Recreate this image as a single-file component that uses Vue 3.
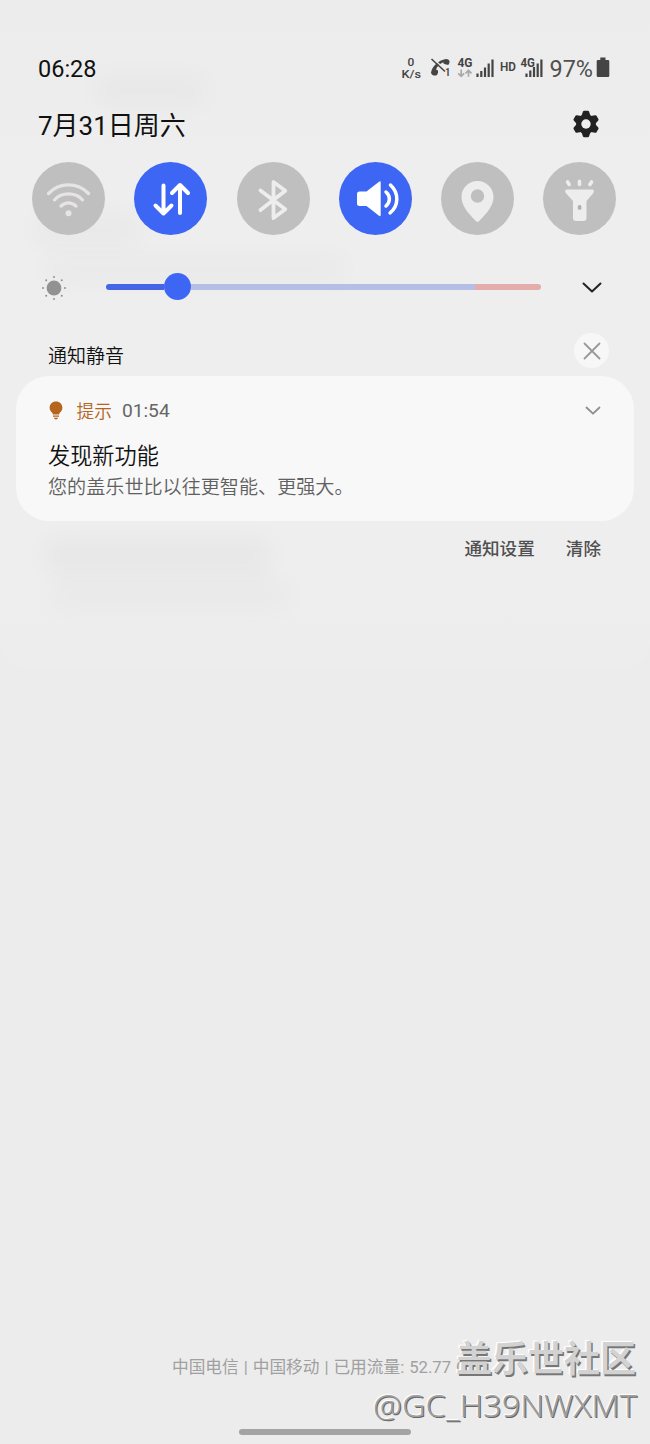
<script setup>
const toggles = [
  { id: 'wifi', on: false },
  { id: 'data', on: true },
  { id: 'bluetooth', on: false },
  { id: 'sound', on: true },
  { id: 'location', on: false },
  { id: 'torch', on: false },
]
const rays = [0, 45, 90, 135, 180, 225, 270, 315]
const teeth = [0, 60, 120, 180, 240, 300]
</script>

<template>
  <main class="screen">
    <div class="haze h1"></div>
    <div class="haze h2"></div>
    <div class="haze h3"></div>
    <div class="haze h4"></div>
    <div class="haze h5"></div>
    <div class="sheet">
      <header class="status">
        <span class="clock">06:28</span>
        <svg class="indicators" width="212" height="30" viewBox="400 53 212 30">
          <g fill="#444" font-weight="500">
            <text x="407.500" y="65.500" font-size="11.500" textLength="6.800" lengthAdjust="spacingAndGlyphs">0</text>
            <text x="401.500" y="77.600" font-size="11.500" textLength="19.500" lengthAdjust="spacingAndGlyphs">K/s</text>
            <text x="444.500" y="76.300" font-size="11">1</text>
            <text x="457.500" y="67" font-size="12.800" font-weight="700" textLength="15" lengthAdjust="spacingAndGlyphs">4G</text>
            <text x="500" y="71.300" font-size="12" font-weight="600" textLength="16" lengthAdjust="spacingAndGlyphs">HD</text>
            <text x="520.500" y="67" font-size="12.800" font-weight="700" textLength="14.500" lengthAdjust="spacingAndGlyphs">4G</text>
            <text x="549.500" y="76.700" font-size="23.500" font-weight="400" fill="#505050" textLength="43.500" lengthAdjust="spacingAndGlyphs">97%</text>
          </g>
          <path d="M431 72.500C432.500 66 438 60.500 446 59C448 59 449.700 60 449.600 62L448.800 64.500C446.500 65 445 64.500 443.500 63.600L443.300 62.300C440 63.500 437 66.500 436 69.700L437.600 70C438.500 71.500 438.300 73 436.800 75.300C434 76.200 431.200 75 431 72.500Z" fill="#444"/>
          <path d="M433 58.500L446 70.500" stroke="#ececec" stroke-width="1.600"/>
          <path d="M431.500 59L445 71.500" stroke="#444" stroke-width="1.600"/>
          <g fill="none" stroke="#aaa" stroke-width="1.700">
            <path d="M461.200 69.500V76M458.200 73.300L461.200 76.300L464.200 73.300M468.500 76.800V70.300M465.500 73.300L468.500 70.300L471.500 73.300"/>
          </g>
          <path d="M477.500 73.500V77M481.300 71V77M485 67.500V77M488.700 63.500V77M492.500 59.500V77" stroke="#444" stroke-width="2.200"/>
          <path d="M526.500 73.500V77M530.300 70.500V77M534 67V77M537.700 63.500V77M541.400 59.500V77" stroke="#444" stroke-width="2.200"/>
          <path d="M600.300 57.500H605.500V60H608Q609.300 60 609.300 61.300V75.700Q609.300 77 608 77H598Q596.700 77 596.700 75.700V61.300Q596.700 60 598 60H600.300Z" fill="#444"/>
        </svg>
      </header>

      <div class="date-row">
        <span class="date">7月31日周六</span>
        <svg width="28" height="28" viewBox="-14 -14 28 28">
          <circle r="9.800" fill="#222"/>
          <path v-for="a in teeth" :key="a" :transform="`rotate(${a})`" d="M-4.600 -8L-3 -12.400Q-2.700 -13.200 -1.900 -13.200H1.900Q2.700 -13.200 3 -12.400L4.600 -8Z" fill="#222"/>
          <circle r="4.700" fill="#eee"/>
        </svg>
      </div>

      <div class="toggles">
        <div v-for="t in toggles" :key="t.id" class="toggle" :class="{ on: t.on }">
          <svg width="73" height="73" viewBox="0 0 73 73" fill="none" stroke-linecap="round" stroke-linejoin="round">
            <g v-if="t.id === 'wifi'" stroke="#e6e4e4" stroke-width="3.300">
              <path d="M16.500 31.500C27.500 20 45.500 20 56.500 31.500M22.500 37.800C30 30 43 30 50.500 37.800M29 44C33.500 39.800 39.500 39.800 44 44"/>
              <circle cx="36.500" cy="51.300" r="3" fill="#e6e4e4" stroke="none"/>
            </g>
            <g v-else-if="t.id === 'data'" stroke="#fff" stroke-width="4">
              <path d="M29.500 23.500V51.500M21.500 43.500L29.500 51.500L37.500 43.500M46 51V23M38 31L46 23L54 31"/>
            </g>
            <path v-else-if="t.id === 'bluetooth'" d="M23.500 28.500L48.300 47.200L36.500 56V20L48.300 28.800L23.500 48" stroke="#ededed" stroke-width="3.800"/>
            <g v-else-if="t.id === 'sound'">
              <path d="M20.500 29.500H27.500L40 19.800Q41.700 18.600 41.700 20.500V53Q41.700 54.900 40 53.700L27.500 44H20.500Q18 44 18 41.500V32Q18 29.500 20.500 29.500Z" fill="#fff"/>
              <path d="M47 30C51.500 34 51.500 40 47 44M51.500 23C60 31 60 43.500 51 51" stroke="#fff" stroke-width="3.500"/>
            </g>
            <path v-else-if="t.id === 'location'" fill-rule="evenodd" fill="#ededed" d="M36.500 19C27.500 19 20.500 26 20.500 35C20.500 43.500 27 51 34.800 59Q36.500 60.700 38.200 59C46 51 52.500 43.500 52.500 35C52.500 26 45.500 19 36.500 19ZM36.500 27.300A6.700 6.700 0 1 1 36.500 40.700A6.700 6.700 0 1 1 36.500 27.300Z"/>
            <g v-else transform="translate(0 .5)">
              <path fill="#ededed" d="M23.500 27H49.500Q51 27 50.800 29Q50.500 30.500 49.500 31.500L43.500 38.500V55.500Q43.500 58.500 40.500 58.500H33Q30 58.500 30 55.500V38.500L23.700 31.500Q22.500 30.500 22.200 29Q22 27 23.500 27Z"/>
              <path d="M24.600 19.500L26.200 21.900M36.500 18.800V21.900M48.500 19.500L46.900 21.900" stroke="#ededed" stroke-width="3.600"/>
              <rect x="34.800" y="42.500" width="3.600" height="4.800" rx="1.500" fill="#b0b0b0"/>
            </g>
          </svg>
        </div>
      </div>

      <div class="brightness">
        <svg class="sun" width="26" height="26" viewBox="-13 -13 26 26" fill="#929292">
          <circle r="7.400"/>
          <circle v-for="a in rays" :key="a" :transform="`rotate(${a})`" cy="-11" r="1"/>
        </svg>
        <div class="track"><i class="fill"></i><i class="knob"></i><i class="rest"></i><i class="hot"></i></div>
        <svg class="expand" width="22" height="14" viewBox="0 0 22 14"><path d="M2.500 2.500L11 10.500L19.500 2.500" fill="none" stroke="#222" stroke-width="2" stroke-linecap="round" stroke-linejoin="round"/></svg>
      </div>

      <div class="section-head">
        <span>通知静音</span>
        <div class="close"><svg width="18" height="18" viewBox="0 0 18 18"><path d="M1.500 1.500L16.500 16.500M16.500 1.500L1.500 16.500" stroke="#999" stroke-width="1.800" stroke-linecap="round"/></svg></div>
      </div>

      <article class="card">
        <div class="card-head">
          <svg width="14" height="19" viewBox="0 0 14 19" fill="#b5651d">
            <path d="M7 .5C3.300.5.600 3.200.600 6.700C.600 9 2 10.800 3.400 12Q3.900 12.600 3.900 13.500H10.100Q10.100 12.600 10.600 12C12 10.800 13.400 9 13.400 6.700C13.400 3.200 10.700.5 7 .5Z"/>
            <path d="M4 14.600H10V15.800H4ZM4.800 16.700H9.200Q8.500 18.500 7 18.500T4.800 16.700Z"/>
          </svg>
          <span class="app">提示</span><span class="time">01:54</span>
          <svg class="more" width="18" height="12" viewBox="0 0 18 12"><path d="M2.500 2.500L9 8.700L15.500 2.500" fill="none" stroke="#8e8e8e" stroke-width="1.800" stroke-linecap="round" stroke-linejoin="round"/></svg>
        </div>
        <div class="title">发现新功能</div>
        <div class="desc">您的盖乐世比以往更智能、更强大。</div>
      </article>

      <div class="actions"><span>通知设置</span><span>清除</span></div>
    </div>

    <footer class="carrier">中国电信 | 中国移动 | 已用流量: 52.77 GB</footer>
    <svg class="watermark" width="290" height="104" viewBox="360 1340 290 104">
      <text class="forum" x="456" y="1372" font-size="36" textLength="180">盖乐世社区</text>
      <text class="user" x="373" y="1417" font-size="32" textLength="264" lengthAdjust="spacingAndGlyphs">@GC_H39NWXMT</text>
    </svg>
    <div class="home"></div>
  </main>
</template>

<style>
body { margin: 0; background: #ececec; }
</style>

<style scoped>
.screen {
  position: relative;
  box-sizing: border-box;
  width: 650px;
  height: 1444px;
  overflow: hidden;
  display: flex;
  flex-direction: column;
  background: #ececec;
  font-family: Roboto, "Noto Sans CJK SC", sans-serif;
  color: #111;
}
.sheet {
  height: 668px;
  flex: none;
  box-sizing: border-box;
  padding-top: 48px;
  border-radius: 0 0 26px 26px;
  background: linear-gradient(#ececec, #eee 160px, #eee 600px, #ededed);
}
.haze { position: absolute; z-index: 1; background: #000; filter: blur(14px); opacity: .022; }
.sheet > * { position: relative; z-index: 2; }
.h1 { left: 95px; top: 76px; width: 110px; height: 30px; }
.h2 { left: 35px; top: 215px; width: 105px; height: 30px; }
.h3 { left: 45px; top: 258px; width: 300px; height: 22px; }
.h4 { left: 45px; top: 540px; width: 225px; height: 32px; opacity: .03; }
.h5 { left: 50px; top: 580px; width: 240px; height: 30px; opacity: .018; }
.status {
  height: 40px;
  display: flex;
  align-items: center;
  justify-content: space-between;
  padding: 0 38px;
}
.clock { font-size: 23.500px; padding-top: 1px; }
.date-row {
  height: 74px;
  display: flex;
  align-items: center;
  justify-content: space-between;
  padding: 0 50px 0 38px;
}
.date { font-size: 26px; line-height: 36px; padding-top: 1px; }
.date-row svg { margin-top: -2px; }
.toggles { display: flex; justify-content: space-between; padding: 0 33.500px 0 32px; }
.toggle { width: 73px; height: 73px; border-radius: 50%; background: #bfbfbf; }
.toggle.on { background: #3d66f4; }
.toggle svg { display: block; }
.brightness { height: 103px; display: flex; align-items: center; padding-left: 41px; }
.sun { margin-top: 2px; }
.track { width: 435px; margin-left: 39px; display: flex; align-items: center; }
.fill { width: 58px; height: 6px; border-radius: 3px 0 0 3px; background: #4466e6; }
.knob { width: 27px; height: 27px; border-radius: 50%; background: #3d66f4; }
.rest { width: 284px; height: 6px; background: #b5bfe5; }
.hot { flex: 1; height: 6px; border-radius: 0 3px 3px 0; background: #e4acaa; }
.expand { margin-left: 39.500px; margin-top: 2px; }
.section-head {
  height: 38px;
  display: flex;
  justify-content: space-between;
  padding: 0 41px 0 48px;
  font-size: 19px;
  line-height: 34px;
  font-weight: 350;
}
.section-head span { margin-top: 1.500px; }
.close {
  width: 35px;
  height: 35px;
  margin-top: -5px;
  border-radius: 50%;
  background: #f7f7f7;
  display: flex;
  align-items: center;
  justify-content: center;
}
.card {
  box-sizing: border-box;
  width: 618px;
  height: 145px;
  margin-left: 16px;
  padding: 19px 32px 0;
  border-radius: 33px;
  background: #f8f8f8;
}
.card-head { height: 30px; margin-left: 1px; display: flex; align-items: center; }
.app { margin-left: 13.500px; font-size: 17.700px; color: #b5651d; font-weight: 350; }
.time { margin-left: 10px; font-size: 19.200px; color: #666; }
.more { margin-left: auto; margin-top: 2px; }
.title { margin-top: 14px; font-size: 22.200px; line-height: 34px; font-weight: 350; }
.desc { margin-top: 1px; font-size: 19.100px; line-height: 28px; color: #606060; white-space: nowrap; font-weight: 350; }
.actions {
  height: 52px;
  display: flex;
  align-items: center;
  justify-content: flex-end;
  gap: 31px;
  padding-right: 49px;
  font-size: 17.600px;
  font-weight: 500;
  color: #505050;
}
.carrier {
  margin: 688px 0 0 172px;
  height: 24px;
  flex: none;
  line-height: 24px;
  font-size: 16.700px;
  word-spacing: .8px;
  color: #a0a0a0;
  white-space: nowrap;
}
.watermark { position: absolute; left: 360px; top: 1340px; overflow: visible; }
.watermark text { fill: #d2d2d2; text-shadow: 1.500px 1.500px 0 #777, -1.500px -1.500px 1px #fff; }
.forum { font-family: "Noto Sans CJK SC", sans-serif; font-weight: 700; }
.watermark .user { font-family: "Noto Sans", sans-serif; font-weight: 300; fill: #a0a0a0; text-shadow: 1px 1px 0 #666, -1px -1px 1px #fff; }
.home { width: 172px; height: 6px; flex: none; margin: 49px 0 0 239px; border-radius: 3px; background: #a3a3a3; }
</style>
